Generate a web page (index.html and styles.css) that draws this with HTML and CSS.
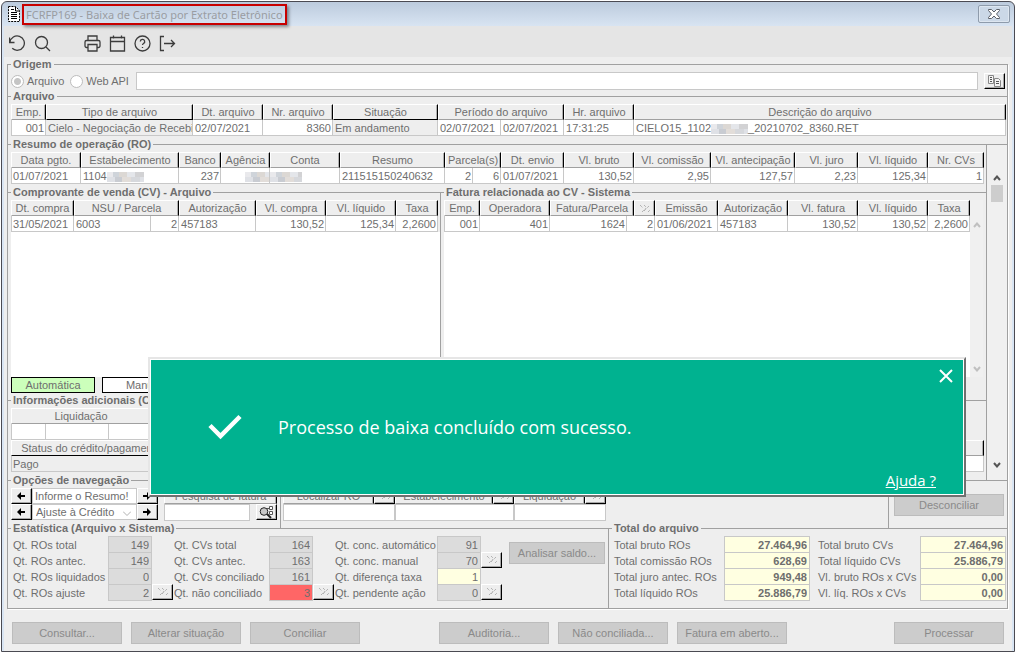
FILE: index.html
```
<!DOCTYPE html>
<html lang="pt-BR">
<head>
    <meta charset="UTF-8">
    <meta name="viewport" content="width=device-width, initial-scale=1.0">
    <title>FCRFP169 - Baixa de Cartão por Extrato Eletrônico</title>
    <link rel="stylesheet" href="styles.css">
</head>
<body>
    <svg width="0" height="0" class="defs" aria-hidden="true">
        <symbol id="dots" viewBox="0 0 12 10">
            <path d="M1 1l3 3M5 1l2 2M5 7l5-5M3 8l4-4M9 8l2-2" fill="none" stroke="#999" stroke-width="1" stroke-dasharray="1 1"/>
        </symbol>
        <symbol id="arrow-left" viewBox="0 0 9 8"><path d="M0 4l4-4v3h4v2H4v3z" fill="#000"/></symbol>
        <symbol id="arrow-right" viewBox="0 0 9 8"><path d="M8 4L4 0v3H0v2h4v3z" fill="#000"/></symbol>
    </svg>

    <div class="window">
        <header class="titlebar">
            <svg class="app-icon" width="12" height="16" viewBox="0 0 12 16">
                <path d="M.5.5h7l4 4v11H.5z" fill="#fff" stroke="#000" stroke-dasharray="2 1"/>
                <path d="M7.500 1v4H11M3 3.500h3M3 6.500h6M3 8.500h6M3 10.500h6M3 12.500h6" fill="none" stroke="#000"/>
            </svg>
            <h1 class="title">FCRFP169 - Baixa de Cartão por Extrato Eletrônico</h1>
            <button class="win-close" aria-label="Fechar">
                <svg width="12" height="10" viewBox="0 0 12 10"><path d="M.5.5h3L6 3 8.500.5h3v1L8.500 5l3 3.500v1h-3L6 7 3.500 9.500h-3v-1L3.500 5l-3-3.500z" fill="#fff" stroke="#5b6068"/></svg>
            </button>
        </header>

        <nav class="toolbar">
            <button aria-label="Desfazer"><svg width="17" height="17" viewBox="0 0 17 17"><path d="M.5 2.500v5h5M1 7.200A7.200 7.200 0 1 1 3.200 13.300"/></svg></button>
            <button aria-label="Pesquisar"><svg width="17" height="17" viewBox="0 0 17 17"><circle cx="7.500" cy="7.500" r="6"/><path d="M12 12l4 4"/></svg></button>
            <span class="toolbar-space"></span>
            <button aria-label="Imprimir"><svg width="17" height="17" viewBox="0 0 17 17"><path d="M4 5.500V1h9v4.500M4 12.500H2.500a1.500 1.500 0 0 1-1.500-1.500V7a1.500 1.500 0 0 1 1.500-1.500h12A1.500 1.500 0 0 1 16 7v4a1.500 1.500 0 0 1-1.500 1.500H13M4 9.500h9V16H4z"/></svg></button>
            <button aria-label="Calendário"><svg width="17" height="17" viewBox="0 0 17 17"><path d="M1.500 2.500h14v13.500h-14zM1.500 6.500h14M4.500.5v3M12.500.5v3"/></svg></button>
            <button aria-label="Ajuda"><svg width="17" height="17" viewBox="0 0 17 17"><circle cx="8.500" cy="8.500" r="7.500"/><path d="M6.300 6.500a2.200 2.200 0 1 1 3.200 2c-.7.400-1 .7-1 1.500M8.500 12v1"/></svg></button>
            <button aria-label="Sair"><svg width="17" height="17" viewBox="0 0 17 17"><path d="M5 1.500H1.500v14H5M5 8.500h10.500M12 5l3.500 3.500L12 12"/></svg></button>
        </nav>

        <div class="content">
        <main class="panel">
            <fieldset class="group first">
                <legend>Origem</legend>
                <div class="origin">
                    <label><input type="radio" name="origem" checked> Arquivo</label>
                    <label><input type="radio" name="origem"> Web API</label>
                    <input type="text" class="path" aria-label="Caminho do arquivo">
                    <button class="bevel copy" aria-label="Selecionar arquivo">
                        <svg width="15" height="13" viewBox="0 0 15 13"><path d="M1.500.5h5v8h-5zM7.500 3.500h4l2 2v6h-6z" fill="#f4f4f4" stroke="#888"/><path d="M3 2.500h2M3 4.500h2M3 6.500h2M9 6.500h3M9 8.500h3" stroke="#555"/></svg>
                    </button>
                </div>
            </fieldset>

            <fieldset class="group">
                <legend>Arquivo</legend>
                <table class="grid">
                    <colgroup><col class="w35"><col class="w147"><col class="w70"><col class="w70"><col class="w105"><col class="w63"><col class="w63"><col class="w70"><col></colgroup>
                    <thead>
                        <tr><th>Emp.</th><th class="locked">Tipo de arquivo</th><th>Dt. arquivo</th><th>Nr. arquivo</th><th class="locked">Situação</th><th colspan="2">Período do arquivo</th><th>Hr. arquivo</th><th>Descrição do arquivo</th></tr>
                    </thead>
                    <tbody>
                        <tr><td class="num">001</td><td class="locked">Cielo - Negociação de Recebi</td><td>02/07/2021</td><td class="num">8360</td><td class="locked">Em andamento</td><td>02/07/2021</td><td>02/07/2021</td><td>17:31:25</td><td>CIELO15_1102<i class="mosaic m-file"></i>_20210702_8360.RET</td></tr>
                    </tbody>
                </table>
            </fieldset>

            <div class="detail">
                <div class="detail-main">
                    <fieldset class="group narrow">
                        <legend>Resumo de operação (RO)</legend>
                        <table class="grid">
                            <colgroup><col class="w70"><col class="w98"><col class="w42"><col class="w49"><col class="w70"><col class="w105"><col class="w28"><col class="w28"><col class="w63"><col class="w70"><col class="w77"><col class="w84"><col class="w63"><col class="w70"><col></colgroup>
                            <thead>
                                <tr><th>Data pgto.</th><th>Estabelecimento</th><th>Banco</th><th>Agência</th><th>Conta</th><th>Resumo</th><th colspan="2">Parcela(s)</th><th>Dt. envio</th><th>Vl. bruto</th><th>Vl. comissão</th><th>Vl. antecipação</th><th>Vl. juro</th><th>Vl. líquido</th><th>Nr. CVs</th></tr>
                            </thead>
                            <tbody>
                                <tr><td>01/07/2021</td><td>1104<i class="mosaic m-estab"></i></td><td class="num">237</td><td class="num flush"><i class="mosaic m-agencia"></i></td><td class="flush"><i class="mosaic m-conta"></i></td><td>211515150240632</td><td class="num">2</td><td class="num">6</td><td>01/07/2021</td><td class="num">130,52</td><td class="num">2,95</td><td class="num">127,57</td><td class="num">2,23</td><td class="num">125,34</td><td class="num">1</td></tr>
                            </tbody>
                        </table>
                    </fieldset>

                    <div class="pair">
                        <fieldset class="group cv">
                            <legend>Comprovante de venda (CV) - Arquivo</legend>
                            <table class="grid">
                                <colgroup><col class="w63"><col class="w77"><col class="w28"><col class="w77"><col class="w70"><col class="w70"><col></colgroup>
                                <thead>
                                    <tr><th>Dt. compra</th><th colspan="2">NSU / Parcela</th><th>Autorização</th><th>Vl. compra</th><th>Vl. líquido</th><th>Taxa</th></tr>
                                </thead>
                                <tbody>
                                    <tr><td>31/05/2021</td><td>6003</td><td class="num">2</td><td>457183</td><td class="num">130,52</td><td class="num">125,34</td><td class="num">2,2600</td></tr>
                                </tbody>
                            </table>
                            <div class="blank"></div>
                            <div class="modes">
                                <button class="mode active">Automática</button>
                                <button class="mode">Manual</button>
                            </div>
                        </fieldset>

                        <fieldset class="group fatura">
                            <legend>Fatura relacionada ao CV - Sistema</legend>
                            <div class="scrolled">
                                <div class="scrolled-body">
                                    <table class="grid">
                                        <colgroup><col class="w36"><col class="w70"><col class="w77"><col class="w7"><col class="w21"><col class="w63"><col class="w70"><col class="w70"><col class="w70"><col></colgroup>
                                        <thead>
                                            <tr><th>Emp.</th><th>Operadora</th><th colspan="2">Fatura/Parcela</th><th><svg width="12" height="10"><use href="#dots"/></svg></th><th>Emissão</th><th>Autorização</th><th>Vl. fatura</th><th>Vl. líquido</th><th>Taxa</th></tr>
                                        </thead>
                                        <tbody>
                                            <tr><td class="num">001</td><td class="num">401</td><td class="num">1624</td><td class="num" colspan="2">2</td><td>01/06/2021</td><td>457183</td><td class="num">130,52</td><td class="num">130,52</td><td class="num">2,2600</td></tr>
                                        </tbody>
                                    </table>
                                    <div class="blank"></div>
                                </div>
                                <div class="scrollbar disabled">
                                    <svg width="8" height="6" viewBox="0 0 8 6"><path d="M1 5l3-3.500L7 5"/></svg>
                                    <svg width="8" height="6" viewBox="0 0 8 6"><path d="M1 1l3 3.500L7 1"/></svg>
                                </div>
                            </div>
                        </fieldset>
                    </div>

                    <fieldset class="group narrow">
                        <legend>Informações adicionais (CV)</legend>
                        <table class="grid half">
                            <colgroup><col class="w35"><col class="w63"><col class="w42"><col></colgroup>
                            <thead><tr><th colspan="3" class="open">Liquidação</th><th></th></tr></thead>
                            <tbody><tr><td></td><td></td><td></td><td></td></tr></tbody>
                        </table>
                        <table class="grid">
                            <colgroup><col class="w154"><col></colgroup>
                            <thead><tr><th class="locked">Status do crédito/pagamento</th><th></th></tr></thead>
                            <tbody><tr><td class="locked">Pago</td><td></td></tr></tbody>
                        </table>
                    </fieldset>
                </div>

                <div class="scrollbar main-scroll">
                    <svg width="8" height="6" viewBox="0 0 8 6"><path d="M1 5l3-3.500L7 5"/></svg>
                    <span class="thumb"></span>
                    <svg width="8" height="6" viewBox="0 0 8 6"><path d="M1 1l3 3.500L7 1"/></svg>
                </div>
            </div>

            <fieldset class="group">
                <legend>Opções de navegação</legend>
                <div class="navigation">
                    <div class="steps">
                        <div class="step">
                            <button class="bevel" aria-label="Resumo anterior"><svg width="9" height="8"><use href="#arrow-left"/></svg></button>
                            <input type="text" value="Informe o Resumo!" aria-label="Resumo">
                            <button class="bevel" aria-label="Próximo resumo"><svg width="9" height="8"><use href="#arrow-right"/></svg></button>
                        </div>
                        <div class="step">
                            <button class="bevel" aria-label="Ajuste anterior"><svg width="9" height="8"><use href="#arrow-left"/></svg></button>
                            <span class="select-wrap">
                                <select aria-label="Tipo de ajuste"><option>Ajuste à Crédito</option></select>
                                <svg class="chevron" width="8" height="5" viewBox="0 0 8 5"><path d="M0 .5l4 4 4-4"/></svg>
                            </span>
                            <button class="bevel" aria-label="Próximo ajuste"><svg width="9" height="8"><use href="#arrow-right"/></svg></button>
                        </div>
                    </div>
                    <div class="search">
                        <label class="head" for="pesquisa">Pesquisa de fatura</label>
                        <div class="search-row">
                            <input type="text" id="pesquisa">
                            <button class="bevel" aria-label="Pesquisar fatura"><svg width="15" height="13" viewBox="0 0 15 13"><circle cx="5" cy="5.500" r="3.800" fill="#c8c8c8" stroke="#222"/><path d="M8 8l4 4" stroke="#222" stroke-width="2"/><path d="M10.500.5h3v3h-3zM10.500 5.500h3v3h-3zM8 2.500h2" fill="#fff" stroke="#555"/></svg></button>
                        </div>
                    </div>
                    <div class="locators">
                        <div class="locator w112">
                            <div class="locator-head"><label class="head" for="loc-ro">Localizar RO</label><button class="bevel" aria-label="Ordenar por RO"><svg width="12" height="10"><use href="#dots"/></svg></button></div>
                            <input type="text" id="loc-ro">
                        </div>
                        <div class="locator w119">
                            <div class="locator-head"><label class="head" for="loc-est">Estabelecimento</label><button class="bevel" aria-label="Ordenar por estabelecimento"><svg width="12" height="10"><use href="#dots"/></svg></button></div>
                            <input type="text" id="loc-est">
                        </div>
                        <div class="locator w92">
                            <div class="locator-head"><label class="head" for="loc-liq">Liquidação</label><button class="bevel" aria-label="Ordenar por liquidação"><svg width="12" height="10"><use href="#dots"/></svg></button></div>
                            <input type="text" id="loc-liq">
                        </div>
                    </div>
                    <div class="undo-box"><button class="flat" disabled>Desconciliar</button></div>
                </div>
            </fieldset>

            <div class="pair">
                <fieldset class="group stats">
                    <legend>Estatística (Arquivo x Sistema)</legend>
                    <div class="stats-body">
                        <div class="fields">
                            <div class="field"><label for="s1">Qt. ROs total</label><input id="s1" value="149" readonly></div>
                            <div class="field"><label for="s2">Qt. ROs antec.</label><input id="s2" value="149" readonly></div>
                            <div class="field"><label for="s3">Qt. ROs liquidados</label><input id="s3" value="0" readonly></div>
                            <div class="field"><label for="s4">Qt. ROs ajuste</label><input id="s4" value="2" readonly><button class="bevel" aria-label="Detalhar ROs ajuste"><svg width="12" height="10"><use href="#dots"/></svg></button></div>
                        </div>
                        <div class="fields">
                            <div class="field"><label for="s5">Qt. CVs total</label><input id="s5" value="164" readonly></div>
                            <div class="field"><label for="s6">Qt. CVs antec.</label><input id="s6" value="163" readonly></div>
                            <div class="field"><label for="s7">Qt. CVs conciliado</label><input id="s7" value="161" readonly></div>
                            <div class="field"><label for="s8">Qt. não conciliado</label><input id="s8" class="alert" value="3" readonly><button class="bevel" aria-label="Detalhar não conciliado"><svg width="12" height="10"><use href="#dots"/></svg></button></div>
                        </div>
                        <div class="fields wide">
                            <div class="field"><label for="s9">Qt. conc. automático</label><input id="s9" value="91" readonly></div>
                            <div class="field"><label for="s10">Qt. conc. manual</label><input id="s10" value="70" readonly><button class="bevel" aria-label="Detalhar conciliação manual"><svg width="12" height="10"><use href="#dots"/></svg></button></div>
                            <div class="field"><label for="s11">Qt. diferença taxa</label><input id="s11" class="note" value="1" readonly></div>
                            <div class="field"><label for="s12">Qt. pendente ação</label><input id="s12" value="0" readonly><button class="bevel" aria-label="Detalhar pendente ação"><svg width="12" height="10"><use href="#dots"/></svg></button></div>
                        </div>
                        <button class="flat analyse" disabled>Analisar saldo...</button>
                    </div>
                </fieldset>

                <fieldset class="group totals">
                    <legend>Total do arquivo</legend>
                    <div class="totals-body">
                        <div class="fields">
                            <div class="field"><label for="t1">Total bruto ROs</label><input id="t1" class="note" value="27.464,96" readonly></div>
                            <div class="field"><label for="t2">Total comissão ROs</label><input id="t2" class="note" value="628,69" readonly></div>
                            <div class="field"><label for="t3">Total juro antec. ROs</label><input id="t3" class="note" value="949,48" readonly></div>
                            <div class="field"><label for="t4">Total líquido ROs</label><input id="t4" class="note" value="25.886,79" readonly></div>
                        </div>
                        <div class="fields">
                            <div class="field"><label for="t5">Total bruto CVs</label><input id="t5" class="note" value="27.464,96" readonly></div>
                            <div class="field"><label for="t6">Total líquido CVs</label><input id="t6" class="note" value="25.886,79" readonly></div>
                            <div class="field"><label for="t7">Vl. bruto ROs x CVs</label><input id="t7" class="note" value="0,00" readonly></div>
                            <div class="field"><label for="t8">Vl. líq. ROs x CVs</label><input id="t8" class="note" value="0,00" readonly></div>
                        </div>
                    </div>
                </fieldset>
            </div>
        </main>

        <footer class="actions">
            <div class="action-set">
                <button class="flat" disabled>Consultar...</button>
                <button class="flat" disabled>Alterar situação</button>
                <button class="flat" disabled>Conciliar</button>
            </div>
            <div class="action-set">
                <button class="flat" disabled>Auditoria...</button>
                <button class="flat" disabled>Não conciliada...</button>
                <button class="flat" disabled>Fatura em aberto...</button>
            </div>
            <button class="flat last" disabled>Processar</button>
        </footer>
        </div>
    </div>

    <div class="toast" role="alertdialog" aria-labelledby="toast-text">
        <button class="toast-close" aria-label="Fechar aviso"><svg width="14" height="14" viewBox="0 0 14 14"><path d="M1 1l12 12M13 1L1 13" stroke="#fff" stroke-width="2"/></svg></button>
        <div class="toast-body">
            <svg width="34" height="26" viewBox="0 0 34 26"><path d="M2 11.500L12.500 22 32 2.500" fill="none" stroke="#fff" stroke-width="4.500"/></svg>
            <p id="toast-text">Processo de baixa concluído com sucesso.</p>
        </div>
        <a class="toast-help" href="#">Ajuda ?</a>
    </div>
</body>
</html>
```

FILE: styles.css
```
* {
    box-sizing: border-box;
}

body {
    margin: 0;
    padding: 1px;
    background: #fff;
    color: #6e6e6e;
    font: 11px/14px "Liberation Sans", Arial, sans-serif;
}

button,
input,
select {
    margin: 0;
    padding: 0;
    color: inherit;
    font: inherit;
    border-radius: 0;
}

.defs {
    position: absolute;
}

/* janela */
.window {
    padding: 0 2px;
    border: 1px solid #4a4a52;
    border-radius: 6px 6px 0 0;
    background: linear-gradient(#bccbdd, #d9e5f3 25px);
}

.titlebar {
    display: flex;
    align-items: center;
    height: 24px;
    padding: 0 2px 0 4px;
}

.title {
    margin: 0 0 0 2px;
    padding: 0 2px;
    border: 2px solid #c80000;
    box-shadow: 2px 2px 3px rgba(0, 0, 0, 0.4);
    color: #9a9da2;
    font: 11px/17px "Noto Sans", sans-serif;
    white-space: nowrap;
}

.win-close {
    display: flex;
    align-items: center;
    justify-content: center;
    width: 32px;
    height: 18px;
    margin-left: auto;
    border: 1px solid #8e9bab;
    border-radius: 2px;
    background: #cbd8e7;
    box-shadow: inset 0 0 0 1px #dde6f0;
}

.toolbar {
    display: flex;
    height: 31px;
    padding: 3px 0 0 1px;
    background: #e5e5e5;
}

.toolbar button {
    display: flex;
    align-items: center;
    justify-content: center;
    width: 25px;
    border: none;
    background: none;
}

.toolbar svg {
    fill: none;
    stroke: #3c3c3c;
    stroke-width: 1.3;
}

.toolbar-space {
    width: 25px;
}

/* grupos */
.content {
    padding-top: 7px;
    background: #eee;
}

.panel {
    margin: 0 4px 0 3px;
    border: 1px solid #a0a0a0;
    border-top: none;
    box-shadow: 1px 1px #fff;
}

/* as legendas ficam sobre a linha do grupo */
.group.first {
    margin-top: -8px;
}

.group {
    min-width: 0;
    margin: 0;
    padding: 0 1px 0 3px;
    border: 0 solid #a0a0a0;
    border-top-width: 1px;
}

.panel {
    display: flow-root;
}

.group.narrow {
    padding-right: 2px;
}

.group legend {
    height: 16px;
    padding: 0 2px;
    font-weight: bold;
    line-height: 16px;
    white-space: nowrap;
}

.pair {
    display: flex;
}

.origin {
    display: flex;
    align-items: center;
    height: 18px;
    margin-bottom: -2px;
}

.origin label {
    display: flex;
    align-items: center;
    gap: 3px;
    margin-right: 6px;
    white-space: nowrap;
}

.origin input[type="radio"] {
    appearance: none;
    width: 13px;
    height: 13px;
    border: 1px solid #bcbcbc;
    border-radius: 50%;
    background: #fff;
}

.origin input[type="radio"]:checked {
    background: radial-gradient(#c4c4c4 3px, #fff 4px);
}

.origin .path {
    flex: 1;
    height: 18px;
    margin: 0 6px 0 1px;
}

.origin .copy {
    margin-right: 1px;
}

input[type="text"] {
    min-width: 0;
    border: 1px solid #c8c8c8;
    background: #fff;
}

.bevel {
    display: flex;
    flex: none;
    align-items: center;
    justify-content: center;
    width: 21px;
    height: 16px;
    border: 1px solid;
    border-color: #fff #000 #000 #fff;
    background: #eee;
    box-shadow: inset -1px -1px #a8a8a8;
}

/* tabelas */
.grid {
    width: 100%;
    border-spacing: 0;
    table-layout: fixed;
}

.grid th,
.head {
    height: 16px;
    padding: 1px 0 0;
    border: 1px solid;
    border-color: #fff #000 #a0a0a0 #fff;
    background: #eee;
    box-shadow: inset -1px 0 #b0b0b0;
    font-weight: normal;
    line-height: 13px;
    text-align: center;
    white-space: nowrap;
    overflow: hidden;
}

.grid th.locked {
    border-bottom-color: #000;
}

.grid th.open {
    border-right-color: #eee;
    box-shadow: none;
}

.grid th svg {
    display: block;
    margin: 0 auto;
}

.grid td {
    height: 16px;
    padding: 2px 0 0 2px;
    border-right: 1px solid #c8c8c8;
    border-bottom: 1px solid #c8c8c8;
    background: #fff;
    line-height: 13px;
    white-space: nowrap;
    overflow: hidden;
}

.grid td:first-child {
    border-left: 1px solid #c8c8c8;
    padding-left: 1px;
}

.grid td.num {
    padding: 2px 1px 0 0;
    text-align: right;
}

.grid td.flush {
    padding: 2px 0 0;
}

.grid td.locked {
    background: #eee;
}

.grid.half {
    width: 480px;
}

.w7 { width: 7px; }
.w21 { width: 21px; }
.w28 { width: 28px; }
.w35 { width: 35px; }
.w36 { width: 36px; }
.w42 { width: 42px; }
.w49 { width: 49px; }
.w63 { width: 63px; }
.w70 { width: 70px; }
.w77 { width: 77px; }
.w84 { width: 84px; }
.w92 { width: 92px; }
.w98 { width: 98px; }
.w105 { width: 105px; }
.w112 { width: 112px; }
.w119 { width: 119px; }
.w147 { width: 147px; }
.w154 { width: 161px; }

/* dados ocultados */
.mosaic {
    display: inline-block;
    height: 10px;
    vertical-align: middle;
    background:
        linear-gradient(90deg, #e9e9ec 6px, #cfd4da 6px 12px, #dcd8d4 12px 20px, #e4e6ea 20px 28px, #d2d2d4 28px) 0 0 / 37px 5px repeat-x,
        linear-gradient(90deg, #dfe1e6 8px, #c9ccd2 8px 15px, #e2ddd9 15px 24px, #d6d8dc 24px) 0 5px / 33px 5px repeat-x;
}

.m-file { width: 37px; }
.m-estab { width: 37px; }
.m-agencia { width: 24px; }
.m-conta { width: 32px; }

/* detalhe */
.detail {
    display: flex;
}

.detail-main {
    flex: 1;
    min-width: 0;
}

.cv {
    flex: 0 0 432px;
    padding-right: 0;
}

.cv .grid {
    width: 427px;
}

.fatura {
    flex: 1;
    border-left-width: 1px;
    padding-right: 3px;
}

.blank {
    height: 145px;
    background: #fff;
}

.modes {
    display: flex;
    gap: 7px;
    height: 15px;
}

.mode {
    width: 84px;
    height: 16px;
    border: 1px solid #000;
    background: #fff;
    line-height: 14px;
}

.mode.active {
    background: #ccffbb;
}

.scrolled {
    display: flex;
}

.scrolled-body {
    flex: 1;
    min-width: 0;
}

.scrollbar {
    display: flex;
    flex-direction: column;
    align-items: center;
    justify-content: space-between;
    background: #f0f0f0;
}

.scrollbar svg {
    fill: none;
    stroke: #555;
    stroke-width: 2;
}

.scrollbar.disabled {
    width: 13px;
    padding: 22px 0 5px;
}

.scrollbar.disabled svg {
    stroke: #c0c0c0;
}

.main-scroll {
    width: 21px;
    margin: 8px 0 -8px;
    padding: 30px 0 12px;
    border-top: 1px solid #a0a0a0;
    border-left: 1px solid #a0a0a0;
}

.main-scroll .thumb {
    width: 12px;
    height: 17px;
    margin: 4px 0 auto;
    background: #cdcdcd;
}

/* navegação */
.navigation {
    display: flex;
    height: 32px;
}

.steps {
    width: 147px;
}

.step {
    display: flex;
    height: 16px;
}

.step input,
.select-wrap {
    flex: 1;
    height: 16px;
}

.step input {
    padding-left: 2px;
}

.select-wrap {
    position: relative;
    border: 1px solid #c8c8c8;
    background: #fff;
}

.select-wrap select {
    display: block;
    appearance: none;
    width: 100%;
    height: 14px;
    padding-left: 3px;
    border: none;
    background: none;
}

.chevron {
    position: absolute;
    right: 5px;
    bottom: 3px;
    fill: none;
    stroke: #b0b0b0;
    pointer-events: none;
}

.search {
    width: 113px;
    margin: 0 3px 0 6px;
}

.head {
    display: block;
    flex: 1;
}

.search-row {
    display: flex;
    justify-content: space-between;
}

.search-row input {
    width: 86px;
    height: 17px;
}

.locators {
    display: flex;
    margin: -8px 0;
    padding: 8px 0 0 2px;
    border-left: 1px solid #a0a0a0;
}

.locator-head {
    display: flex;
}

.locator input {
    display: block;
    width: 100%;
    height: 17px;
}

.undo-box {
    margin: -8px 0 -8px auto;
    padding: 14px 2px 0 5px;
    border-left: 1px solid #a0a0a0;
}

.flat {
    width: 110px;
    height: 22px;
    border: 1px solid #bcbcbc;
    background: #ccc;
    color: #8a8a8a;
    white-space: nowrap;
}

/* estatística e totais */
.stats {
    flex: 0 0 600px;
}

.stats-body,
.totals-body {
    display: flex;
    height: 72px;
    padding-left: 2px;
}

.fields {
    width: 161px;
}

.fields.wide {
    width: 168px;
}

.field {
    display: flex;
    height: 16px;
    white-space: nowrap;
}

.field label {
    width: 95px;
    line-height: 18px;
}

.wide .field label {
    width: 102px;
}

.field input {
    width: 44px;
    height: 17px;
    padding: 1px 2px 0 0;
    border: 1px solid #c8c8c8;
    background: #dcdcdc;
    text-align: right;
}

.field input.alert {
    background: #ff6666;
}

.field input.note {
    background: #ffffe1;
}

.analyse {
    width: 96px;
    margin: 6px 0 0 6px;
}

.totals {
    flex: 1;
    border-left-width: 1px;
}

.totals-body {
    justify-content: space-between;
}

.totals .fields {
    width: 196px;
}

.totals .fields + .fields {
    width: 188px;
}

.totals .field label {
    flex: 1;
}

.totals .field input {
    width: 86px;
    font-weight: bold;
}

/* rodapé */
.actions {
    display: flex;
    gap: 79px;
    padding: 13px 8px 7px;
}

.action-set {
    display: flex;
    gap: 9px;
}

.actions .last {
    margin-left: auto;
}

/* aviso */
.toast {
    position: absolute;
    top: 357px;
    left: 148px;
    right: 50px;
    height: 140px;
    border: 2px solid;
    border-color: #e6e6e6 #707070 #707070 #e6e6e6;
    background: #00b290;
    box-shadow: inset -1px -1px #fff, inset 1px 1px #fff;
    color: #fff;
    font: 18px/24px "Open Sans", sans-serif;
}

.toast-close {
    position: absolute;
    top: 10px;
    right: 11px;
    display: flex;
    border: none;
    background: none;
}

.toast-body {
    display: flex;
    align-items: center;
    gap: 36px;
    height: 100%;
    padding-left: 58px;
}

.toast-body p {
    margin: 0;
}

.toast-help {
    position: absolute;
    right: 28px;
    bottom: 3px;
    color: #fff;
    font-size: 15px;
}
```
